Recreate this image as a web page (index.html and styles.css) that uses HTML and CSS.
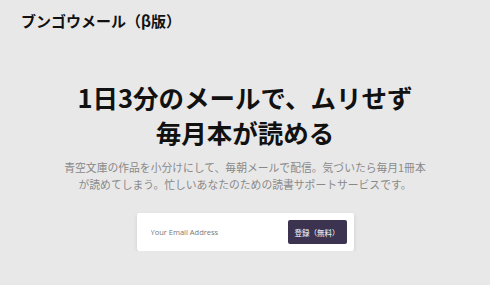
FILE: index.html
```html
<!DOCTYPE html>
<html lang="ja">
  <head>
    <meta charset="UTF-8" />
    <meta name="viewport" content="width=device-width, initial-scale=1.0" />
    <title>ブンゴウメール（β版）</title>
    <link rel="stylesheet" href="styles.css">
  </head>
  <body>
    <header class="site-header">
      <div class="logo">ブンゴウメール（β版）</div>
    </header>

    <section class="hero">
      <h1>1日3分のメールで、ムリせず<br>毎月本が読める</h1>
      <p class="lead">
        青空文庫の作品を小分けにして、毎朝メールで配信。気づいたら毎月1冊本<br>
        が読めてしまう。忙しいあなたのための読書サポートサービスです。
      </p>

      <form class="signup" onsubmit="return false;">
        <input type="email" placeholder="Your Email Address">
        <button type="submit">登録（無料）</button>
      </form>
    </section>
  </body>
</html>
```

FILE: styles.css
```css
body {
  margin: 0;
  background-color: #e8e8e8;
  font-family: "Noto Sans CJK JP", "Noto Sans", sans-serif;
  color: #111;
}
.site-header {
  padding: 10px 21px 0;
}
.logo {
  font-size: 15px;
  font-weight: bold;
  line-height: 22px;
}
.hero {
  text-align: center;
}
h1 {
  margin: 47px 0 0;
  font-size: 25.5px;
  line-height: 35px;
  font-weight: bold;
}
.lead {
  margin: 10px 0 0;
  font-size: 10.8px;
  line-height: 17px;
  color: #888;
}
.signup {
  display: flex;
  align-items: center;
  justify-content: space-between;
  width: 217px;
  height: 38px;
  margin: 20px auto 0;
  padding: 0 7px 0 14px;
  box-sizing: border-box;
  background-color: #fff;
  border-radius: 2px;
  box-shadow: 0 2px 4px rgba(0, 0, 0, 0.12);
}
.signup input {
  border: none;
  outline: none;
  width: 120px;
  font-family: "Open Sans", sans-serif;
  font-size: 7.5px;
  color: #555;
  padding: 0;
}
.signup input::placeholder {
  color: #777;
}
.signup button {
  width: 59px;
  height: 24px;
  border: none;
  border-radius: 2px;
  background-color: #3b3350;
  color: #fff;
  font-family: "Noto Sans CJK JP", sans-serif;
  font-size: 7.5px;
  padding: 0;
  cursor: pointer;
}
```
